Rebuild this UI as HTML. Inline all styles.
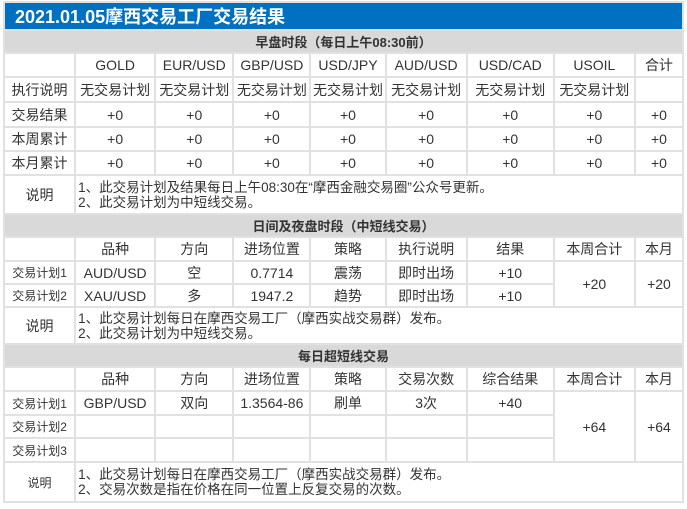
<!DOCTYPE html>
<html><head><meta charset="utf-8"><style>
body{margin:0;background:#fff;}
table{position:absolute;left:3px;top:1px;width:681px;table-layout:fixed;border-collapse:separate;border-spacing:2px;background:#e1e1e1;font-family:"Liberation Sans","Noto Sans CJK SC",sans-serif;font-size:14px;color:#333;}
td{background:#fff;text-align:center;padding:0;white-space:nowrap;overflow:hidden;}
.t td{background:#0070c0;color:#fff;font-weight:bold;font-size:18px;text-align:left;padding-left:10px;height:26px;}
.s td{background:#d9d9d9;font-weight:bold;height:21px;font-size:13px;}
.sm{font-size:12px;}
.n{text-align:left;padding-left:2px;line-height:15px;font-size:13.5px;}
</style></head><body>
<table>
<colgroup><col style="width:69px"><col style="width:78px"><col style="width:76px"><col style="width:75px"><col style="width:73px"><col style="width:79px"><col style="width:85px"><col style="width:79px"><col style="width:46px"></colgroup>
<tr class="t"><td colspan="9">2021.01.05摩西交易工厂交易结果</td></tr>
<tr class="s"><td colspan="9">早盘时段（每日上午08:30前）</td></tr>
<tr style="height:22px"><td></td><td>GOLD</td><td>EUR/USD</td><td>GBP/USD</td><td>USD/JPY</td><td>AUD/USD</td><td>USD/CAD</td><td>USOIL</td><td>合计</td></tr>
<tr style="height:23px"><td>执行说明</td><td>无交易计划</td><td>无交易计划</td><td>无交易计划</td><td>无交易计划</td><td>无交易计划</td><td>无交易计划</td><td>无交易计划</td><td></td></tr>
<tr style="height:23px"><td>交易结果</td><td>+0</td><td>+0</td><td>+0</td><td>+0</td><td>+0</td><td>+0</td><td>+0</td><td>+0</td></tr>
<tr style="height:22px"><td>本周累计</td><td>+0</td><td>+0</td><td>+0</td><td>+0</td><td>+0</td><td>+0</td><td>+0</td><td>+0</td></tr>
<tr style="height:22px"><td>本月累计</td><td>+0</td><td>+0</td><td>+0</td><td>+0</td><td>+0</td><td>+0</td><td>+0</td><td>+0</td></tr>
<tr style="height:37px"><td>说明</td><td colspan="8" class="n">1、此交易计划及结果每日上午08:30在“摩西金融交易圈”公众号更新。<br>2、此交易计划为中短线交易。</td></tr>
<tr class="s"><td colspan="9">日间及夜盘时段（中短线交易）</td></tr>
<tr style="height:22px"><td></td><td>品种</td><td>方向</td><td>进场位置</td><td>策略</td><td>执行说明</td><td>结果</td><td>本周合计</td><td>本月</td></tr>
<tr style="height:21px"><td class="sm">交易计划1</td><td>AUD/USD</td><td>空</td><td>0.7714</td><td>震荡</td><td>即时出场</td><td>+10</td><td rowspan="2">+20</td><td rowspan="2">+20</td></tr>
<tr style="height:21px"><td class="sm">交易计划2</td><td>XAU/USD</td><td>多</td><td>1947.2</td><td>趋势</td><td>即时出场</td><td>+10</td></tr>
<tr style="height:35px"><td>说明</td><td colspan="8" class="n">1、此交易计划每日在摩西交易工厂（摩西实战交易群）发布。<br>2、此交易计划为中短线交易。</td></tr>
<tr class="s"><td colspan="9">每日超短线交易</td></tr>
<tr style="height:22px"><td></td><td>品种</td><td>方向</td><td>进场位置</td><td>策略</td><td>交易次数</td><td>综合结果</td><td>本周合计</td><td>本月</td></tr>
<tr style="height:22px"><td class="sm">交易计划1</td><td>GBP/USD</td><td>双向</td><td>1.3564-86</td><td>刷单</td><td>3次</td><td>+40</td><td rowspan="3">+64</td><td rowspan="3">+64</td></tr>
<tr style="height:21px"><td class="sm">交易计划2</td><td></td><td></td><td></td><td></td><td></td><td></td></tr>
<tr style="height:22px"><td class="sm">交易计划3</td><td></td><td></td><td></td><td></td><td></td><td></td></tr>
<tr style="height:38px"><td class="sm">说明</td><td colspan="8" class="n">1、此交易计划每日在摩西交易工厂（摩西实战交易群）发布。<br>2、交易次数是指在价格在同一位置上反复交易的次数。</td></tr>
</table>
</body></html>
